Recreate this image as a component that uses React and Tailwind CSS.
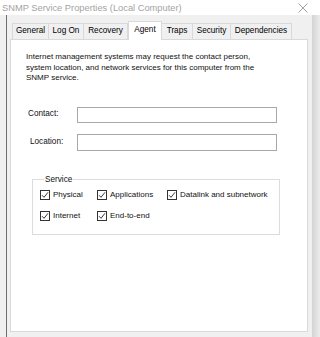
import React from "react";

const Check = ({ label, w }) => (
  <div className="flex items-center" style={{ width: w }}>
    <div className="w-[10px] h-[10px] border border-[#333333] bg-white flex items-center justify-center shrink-0">
      <svg width="8" height="8" viewBox="0 0 8 8">
        <path d="M1 4.2 L3 6.3 L7 1.3" fill="none" stroke="#222" strokeWidth="0.9" />
      </svg>
    </div>
    <span className="ml-[3px] text-[8px] leading-[10px] text-[#111] whitespace-nowrap">{label}</span>
  </div>
);

const tabs = [
  ["General", 37],
  ["Log On", 35],
  ["Recovery", 44],
  ["Agent", 34, true],
  ["Traps", 31],
  ["Security", 38],
  ["Dependencies", 61],
];

export default function App() {
  return (
    <div
      className="w-[320px] h-[337px] bg-[#f0f0f0] flex flex-col overflow-hidden"
      style={{ fontFamily: '"Liberation Sans", Arial, sans-serif' }}
    >
      <div className="h-[15px] bg-white flex items-center justify-between pl-[2px] pr-[12px] shrink-0">
        <span className="text-[9.3px] leading-[12px] text-[#a3a3a3]">SNMP Service Properties (Local Computer)</span>
        <svg width="10" height="10" viewBox="0 0 10 10">
          <path d="M0.5 0.5 L9.5 9.5 M9.5 0.5 L0.5 9.5" stroke="#8a8a8a" strokeWidth="0.8" />
        </svg>
      </div>
      <div className="flex flex-1">
        <div className="w-[6px]" />
        <div className="w-px bg-[#6f6f6f]" />
        <div className="w-[3px]" />
        <div className="w-[298px] flex flex-col pb-[5px]">
          <div className="flex items-end pl-[2px] pt-[5px] h-[24px] relative z-10">
            {tabs.map(([t, w, sel]) => (
              <div
                key={t}
                style={{ width: w }}
                className={
                  sel
                    ? "h-[19px] -mb-px bg-white border border-b-0 border-[#d9d9d9] flex items-center justify-center text-[8.2px] text-black pb-[2px]"
                    : "h-[16px] border border-b-0 border-l-0 first:border-l border-[#d9d9d9] bg-[#f0f0f0] flex items-center justify-center text-[8.2px] text-black"
                }
              >
                {t}
              </div>
            ))}
          </div>
          <div className="flex-1 bg-white border border-[#d9d9d9] flex flex-col pt-[12px]">
            <p className="pl-[15px] text-[8px] leading-[10.5px] text-[#111] whitespace-nowrap">
              Internet management systems may request the contact person,
              <br />
              system location, and network services for this computer from the
              <br />
              SNMP service.
            </p>
            <div className="flex items-center pl-[17px] mt-[23px]">
              <span className="w-[49px] text-[8.2px] text-[#111]">Contact:</span>
              <div className="w-[200px] h-[16px] border border-[#a8a8a8]" />
            </div>
            <div className="flex items-center pl-[19px] mt-[11px]">
              <span className="w-[47px] text-[8.2px] text-[#111]">Location:</span>
              <div className="w-[200px] h-[17px] border border-[#a8a8a8]" />
            </div>
            <fieldset className="ml-[21px] mt-[24px] w-[248px] border border-[#dcdcdc] pl-[7px] pb-[13px]">
              <legend className="ml-[4px] px-[1px] text-[8.2px] leading-[10px] text-[#111]">Service</legend>
              <div className="flex mt-[5px]">
                <Check label="Physical" w={57} />
                <Check label="Applications" w={70} />
                <Check label="Datalink and subnetwork" w={110} />
              </div>
              <div className="flex mt-[11px]">
                <Check label="Internet" w={57} />
                <Check label="End-to-end" w={70} />
              </div>
            </fieldset>
          </div>
        </div>
        <div className="w-[4px]" />
        <div className="w-[8px] bg-gradient-to-r from-[#d4d4d4] to-[#ececec]" />
      </div>
    </div>
  );
}
